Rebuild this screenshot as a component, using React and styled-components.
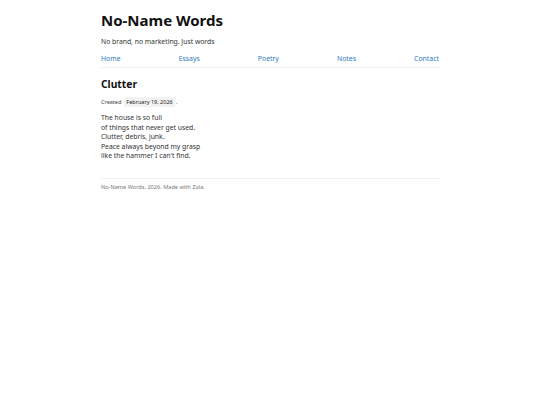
import React from 'react'
import styled, { createGlobalStyle } from 'styled-components'

const GlobalStyle = createGlobalStyle`
  body {
    margin: 0;
    background: #fff;
    font-family: "Noto Sans", sans-serif;
    color: #222;
  }
`

const Page = styled.div`
  width: 338px;
  margin: 0 auto;
  padding-top: 9px;
`

const Title = styled.h1`
  margin: 0;
  font-size: 15px;
  font-weight: 700;
  line-height: 22px;
  color: #111;
`

const Tagline = styled.p`
  margin: 5px 0 0;
  font-size: 6.8px;
  line-height: 12px;
  color: #333;
`

const Nav = styled.nav`
  display: flex;
  justify-content: space-between;
  margin-top: 5px;
  padding-bottom: 2px;
  border-bottom: 1px solid #eee;

  a {
    font-size: 6.9px;
    line-height: 12px;
    color: #2b7bbf;
    text-decoration: none;
  }
`

const Post = styled.article`
  margin-top: 9px;
`

const PostTitle = styled.h2`
  margin: 0;
  font-size: 10.3px;
  font-weight: 700;
  line-height: 14px;
  color: #111;
`

const Meta = styled.div`
  margin-top: 6px;
  font-size: 5.5px;
  line-height: 10px;
  color: #444;
`

const DateTag = styled.time`
  display: inline-block;
  margin-left: 3px;
  padding: 0 2px;
  background: #f2f2f2;
  border-radius: 1px;
  color: #222;
`

const Poem = styled.p`
  margin: 6px 0 0;
  font-size: 6.8px;
  line-height: 9.6px;
  color: #333;
`

const Footer = styled.footer`
  margin-top: 17px;
  padding-top: 3px;
  border-top: 1px solid #f0f0f0;
  font-size: 5.6px;
  line-height: 10px;
  color: #777;
`

export default function App() {
  return (
    <Page>
      <GlobalStyle />
      <header>
        <Title>No-Name Words</Title>
        <Tagline>No brand, no marketing. Just words</Tagline>
        <Nav>
          <a href="#">Home</a>
          <a href="#">Essays</a>
          <a href="#">Poetry</a>
          <a href="#">Notes</a>
          <a href="#">Contact</a>
        </Nav>
      </header>
      <Post>
        <PostTitle>Clutter</PostTitle>
        <Meta>
          Created<DateTag>February 19, 2026</DateTag> .
        </Meta>
        <Poem>
          The house is so full<br />
          of things that never get used.<br />
          Clutter, debris, junk.<br />
          Peace always beyond my grasp<br />
          like the hammer I can't find.
        </Poem>
      </Post>
      <Footer>No-Name Words, 2026. Made with Zola.</Footer>
    </Page>
  )
}
